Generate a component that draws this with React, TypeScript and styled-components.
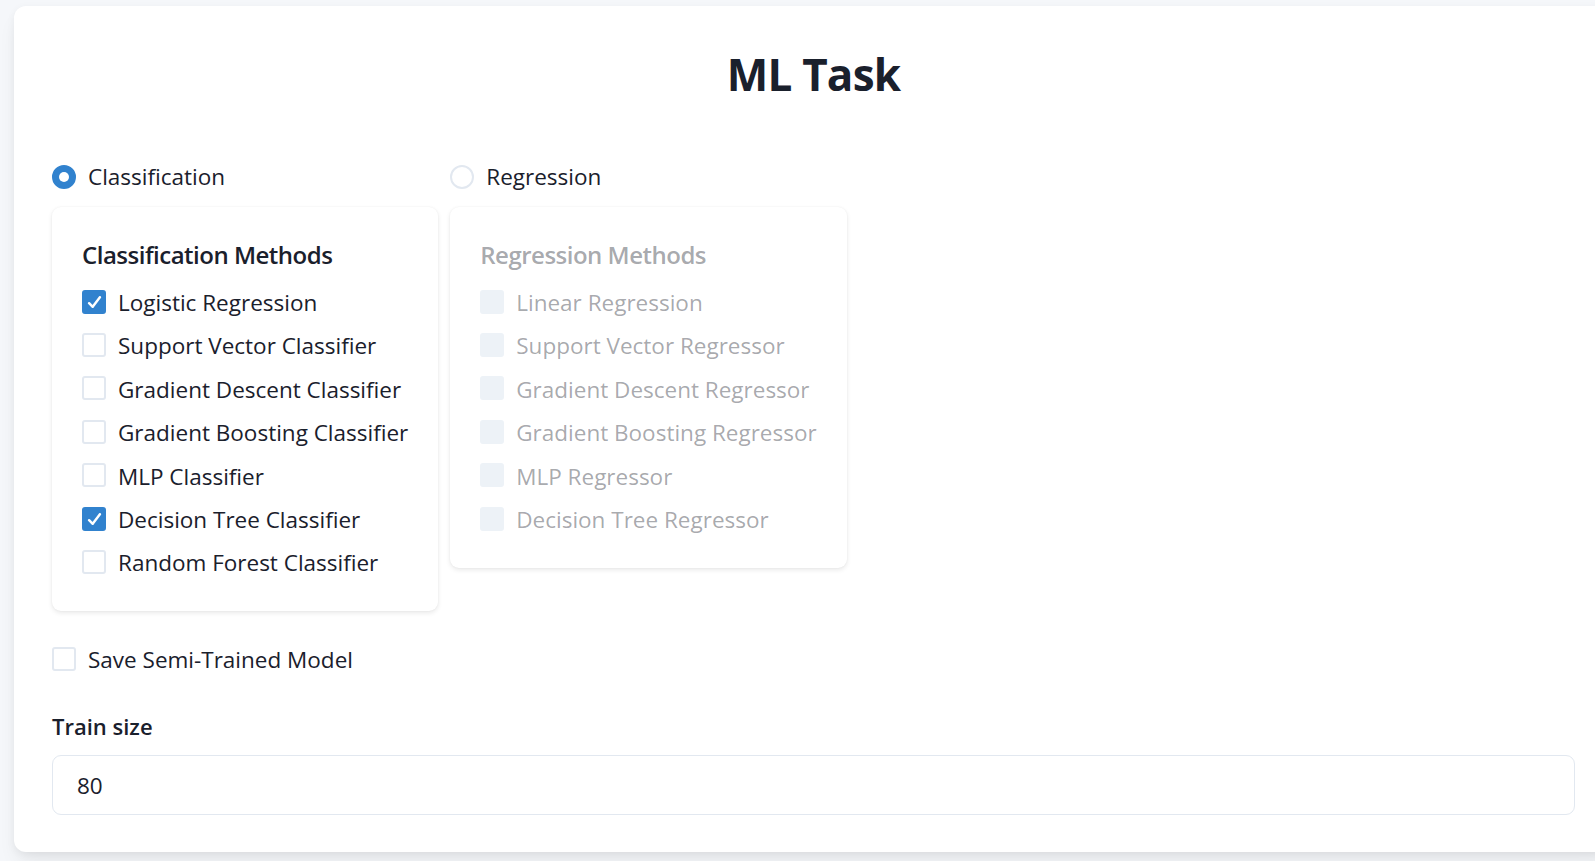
import React from 'react';
import styled, { createGlobalStyle, css } from 'styled-components';

const GlobalStyle = createGlobalStyle`
  html, body {
    margin: 0;
    padding: 0;
    background: #f5f7fa;
    overflow: hidden;
  }
  body {
    font-family: "Open Sans", "Noto Sans", sans-serif;
    color: #1a202c;
  }
`;

const Page = styled.div`
  width: 1595px;
  height: 861px;
  padding: 6px 0 0 14px;
  box-sizing: border-box;
  overflow: hidden;
`;

const Card = styled.section`
  width: 1599px;
  box-sizing: border-box;
  padding: 38px 38px 37px;
  background: #fff;
  border-radius: 12px;
  box-shadow: 0 12px 20px -4px rgba(0, 0, 0, 0.08), 0 2px 8px rgba(0, 0, 0, 0.05);
  display: flex;
  flex-direction: column;
`;

const Title = styled.h1`
  margin: 4px 0 0;
  font-size: 44px;
  line-height: 52.8px;
  font-weight: 700;
  text-align: center;
  letter-spacing: -0.8px;
`;

const Columns = styled.div`
  display: flex;
  align-items: flex-start;
  gap: 12px;
  margin-top: 58px;
`;

const Column = styled.div`
  display: flex;
  flex-direction: column;
  gap: 12px;
`;

const Row = styled.label<{ $disabled?: boolean }>`
  display: flex;
  align-items: center;
  gap: 12px;
  height: 36px;
  font-size: 22.5px;
  line-height: 36px;
  cursor: pointer;
  color: ${p => (p.$disabled ? 'rgba(26, 32, 44, 0.4)' : '#1a202c')};
`;

const RadioDot = styled.span<{ $checked?: boolean }>`
  width: 24px;
  height: 24px;
  box-sizing: border-box;
  border-radius: 50%;
  flex-shrink: 0;
  display: flex;
  align-items: center;
  justify-content: center;
  border: 2px solid ${p => (p.$checked ? '#3182ce' : '#e2e8f0')};
  background: ${p => (p.$checked ? '#3182ce' : '#fff')};
  ${p =>
    p.$checked &&
    css`
      &::before {
        content: '';
        width: 10px;
        height: 10px;
        border-radius: 50%;
        background: #fff;
      }
    `}
`;

const Box = styled.span<{ $checked?: boolean; $disabled?: boolean }>`
  width: 24px;
  height: 24px;
  box-sizing: border-box;
  border-radius: 3px;
  flex-shrink: 0;
  display: flex;
  align-items: center;
  justify-content: center;
  margin-top: -3px;
  border: 2px solid ${p => (p.$checked ? '#3182ce' : p.$disabled ? '#edf2f7' : '#e2e8f0')};
  background: ${p => (p.$checked ? '#3182ce' : p.$disabled ? '#edf2f7' : '#fff')};
`;

const MethodPanel = styled.div`
  padding: 30px;
  border-radius: 9px;
  background: #fff;
  box-shadow: 0 2px 5px rgba(0, 0, 0, 0.09), 0 0 2px rgba(0, 0, 0, 0.05);
`;

const PanelTitle = styled.h3<{ $disabled?: boolean }>`
  margin: 0 0 12.3px;
  font-size: 24px;
  line-height: 36px;
  font-weight: 600;
  letter-spacing: -0.5px;
  color: ${p => (p.$disabled ? 'rgba(26, 32, 44, 0.4)' : '#1a202c')};
`;

const MethodList = styled.div`
  display: flex;
  flex-direction: column;
  gap: 7.4px;
`;

const SaveRow = styled.div`
  margin-top: 31px;
`;

const FieldLabel = styled.div`
  margin-top: 30px;
  margin-bottom: 11px;
  font-size: 22px;
  line-height: 36px;
  font-weight: 600;
`;

const NumberInput = styled.input`
  height: 60px;
  width: 100%;
  box-sizing: border-box;
  border: 1px solid #e2e8f0;
  border-radius: 9px;
  padding: 0 24px;
  font-family: inherit;
  font-size: 22.5px;
  color: #1a202c;
  background: #fff;
  outline: none;
`;

function Check() {
  return (
    <svg width="15" height="12" viewBox="0 0 12 10">
      <polyline
        points="1.5 6 4.5 9 10.5 1"
        fill="none"
        stroke="#fff"
        strokeWidth="2"
        strokeLinecap="round"
        strokeLinejoin="round"
      />
    </svg>
  );
}

function Checkbox({ label, checked, disabled }: { label: string; checked?: boolean; disabled?: boolean }) {
  return (
    <Row $disabled={disabled}>
      <Box $checked={checked} $disabled={disabled}>{checked && <Check />}</Box>
      {label}
    </Row>
  );
}

const classifiers = [
  { name: 'Logistic Regression', on: true },
  { name: 'Support Vector Classifier', on: false },
  { name: 'Gradient Descent Classifier', on: false },
  { name: 'Gradient Boosting Classifier', on: false },
  { name: 'MLP Classifier', on: false },
  { name: 'Decision Tree Classifier', on: true },
  { name: 'Random Forest Classifier', on: false },
];

const regressors = [
  'Linear Regression',
  'Support Vector Regressor',
  'Gradient Descent Regressor',
  'Gradient Boosting Regressor',
  'MLP Regressor',
  'Decision Tree Regressor',
];

export default function App() {
  return (
    <Page>
      <GlobalStyle />
      <Card>
        <Title>ML Task</Title>
        <Columns>
          <Column>
            <Row>
              <RadioDot $checked />
              Classification
            </Row>
            <MethodPanel>
              <PanelTitle>Classification Methods</PanelTitle>
              <MethodList>
                {classifiers.map(c => (
                  <Checkbox key={c.name} label={c.name} checked={c.on} />
                ))}
              </MethodList>
            </MethodPanel>
          </Column>
          <Column>
            <Row>
              <RadioDot />
              Regression
            </Row>
            <MethodPanel>
              <PanelTitle $disabled>Regression Methods</PanelTitle>
              <MethodList>
                {regressors.map(r => (
                  <Checkbox key={r} label={r} disabled />
                ))}
              </MethodList>
            </MethodPanel>
          </Column>
        </Columns>
        <SaveRow>
          <Checkbox label="Save Semi-Trained Model" />
        </SaveRow>
        <FieldLabel>Train size</FieldLabel>
        <NumberInput type="number" defaultValue={80} />
      </Card>
    </Page>
  );
}
